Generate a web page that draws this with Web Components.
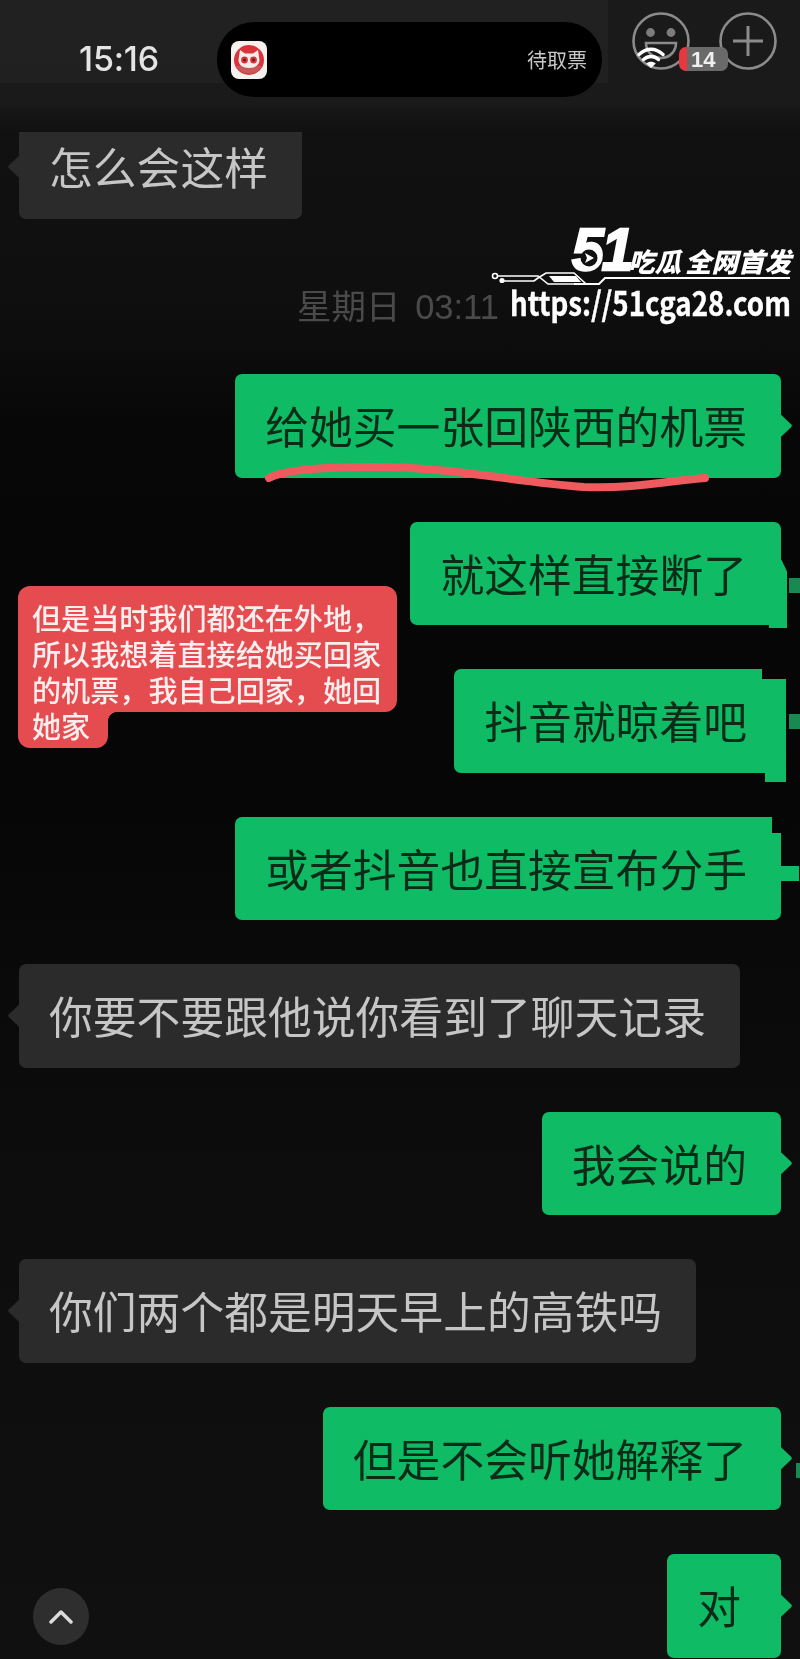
<!DOCTYPE html>
<html lang="zh-CN">
<head>
<meta charset="utf-8">
<title>聊天记录</title>
<style>
html,body{margin:0;padding:0;background:#0a0a0a}
body{width:800px;height:1659px;overflow:hidden;font-family:"Noto Sans CJK SC","Liberation Sans",sans-serif}
</style>
</head>
<body>
<chat-screen>
  <status-header slot="header"></status-header>
  <chat-bubble side="in" first>怎么会这样</chat-bubble>
  <time-stamp>星期日 03:11</time-stamp>
  <chat-bubble side="out">给她买一张回陕西的机票<ink-underline></ink-underline></chat-bubble>
  <chat-bubble side="out" glitch="a">就这样直接断了</chat-bubble>
  <chat-bubble side="out" glitch="b">抖音就晾着吧</chat-bubble>
  <chat-bubble side="out" glitch="c">或者抖音也直接宣布分手</chat-bubble>
  <chat-bubble side="in">你要不要跟他说你看到了聊天记录</chat-bubble>
  <chat-bubble side="out">我会说的</chat-bubble>
  <chat-bubble side="in">你们两个都是明天早上的高铁吗</chat-bubble>
  <chat-bubble side="out" glitch="d">但是不会听她解释了</chat-bubble>
  <chat-bubble side="out" wide>对</chat-bubble>
  <note-label slot="overlay"></note-label>
  <site-watermark slot="overlay"></site-watermark>
  <scroll-button slot="overlay"></scroll-button>
</chat-screen>

<script>
function define(name, css, html){
  customElements.define(name, class extends HTMLElement{
    constructor(){
      super();
      const root=this.attachShadow({mode:'open'});
      root.innerHTML='<style>'+css+'</style>'+html;
    }
  });
}

define('chat-screen',`
  :host{display:block;position:relative;width:800px;height:1659px;overflow:hidden;filter:blur(.45px);
    background:linear-gradient(#111 130px,#0f0f0f 300px,#070707 430px,#060606 780px,#0a0a0a 1000px,#0e0e0e 1300px,#101011 1659px)}
  .head{position:relative;z-index:2}
  .list{display:flex;flex-direction:column;margin-top:-17px}
`,`
  <div class="head"><slot name="header"></slot></div>
  <div class="list"><slot></slot></div>
  <slot name="overlay"></slot>
`);

define('status-header',`
  :host{display:flex;align-items:flex-start;box-sizing:border-box;height:132px;padding:12px 0 0 79px;
    background:
      linear-gradient(#212121,#202020) 0 0/608px 83px no-repeat,
      linear-gradient(#1a1a1a 0 104px,#151515 112px,#121212 130px,#101010 132px);
    font-family:Inter,"Liberation Sans",sans-serif}
  .time{width:138px;margin-top:27px;font-size:34px;line-height:40px;font-weight:500;color:#e4e4e4;letter-spacing:-.2px}
  .pill{display:flex;align-items:center;justify-content:space-between;box-sizing:border-box;width:385px;height:75px;margin-top:10px;
    padding:0 15px 0 14px;border-radius:37px;background:#000}
  .app{display:block;width:36px;height:38px}
  .ticket{font:20px/24px "Noto Sans CJK SC",sans-serif;color:#c8c8c8}
  .tools{display:flex;gap:29px;margin-left:30px;position:relative}
  .wifi{position:absolute;left:5px;top:34px;width:28px;height:23px}
  .badge{position:absolute;left:47px;top:35px;width:49px;height:24px;border-radius:7px;box-sizing:border-box;padding-left:12px;
    background:linear-gradient(90deg,#e8383f 0 8px,#6a6a6a 8px);color:#f0f0f0;font:700 22px/25px "Liberation Sans",sans-serif}
  svg.ico{display:block;width:58px;height:58px}
`,`
  <div class="time">15:16</div>
  <div class="pill">
    <svg class="app" viewBox="0 0 36 38">
      <rect x="0" y="0" width="36" height="38" rx="8" fill="#f6f0ee"/>
      <circle cx="18" cy="19" r="15" fill="#d9343a"/>
      <path d="M5 25h26a15 15 0 0 1-26 0z" fill="#c9585a"/>
      <path d="M9 9l5 3.500h8l5-3.500 1.500 10c0 5-4.500 8-10.500 8S7.500 24 7.500 19z" fill="#f6ecea"/>
      <circle cx="13.500" cy="19" r="3.400" fill="#d9343a"/>
      <circle cx="22.500" cy="19" r="3.400" fill="#d9343a"/>
      <circle cx="13.500" cy="19" r="1.400" fill="#5a2024"/>
      <circle cx="22.500" cy="19" r="1.400" fill="#5a2024"/>
    </svg>
    <span class="ticket">待取票</span>
  </div>
  <div class="tools">
    <svg class="ico" viewBox="0 0 58 58" fill="none" stroke="#8b8b8b" stroke-width="2.6">
      <circle cx="29" cy="29" r="27.5"/>
      <circle cx="18.5" cy="20.5" r="4.4" fill="#7c7c7c" stroke="none"/>
      <circle cx="39" cy="20.5" r="4.4" fill="#7c7c7c" stroke="none"/>
      <path d="M14 31h30c0 8-6 15-15 15s-15-7-15-15z"/>
    </svg>
    <svg class="ico" viewBox="0 0 58 58" fill="none" stroke="#8b8b8b" stroke-width="2.6">
      <circle cx="29" cy="29" r="27.5"/>
      <path d="M14 29h30M29 14v30" stroke-width="3"/>
    </svg>
    <svg class="wifi" viewBox="0 0 28 23" fill="none" stroke="#fff" stroke-width="3.4" stroke-linecap="round">
      <path d="M2 8.500C9.500 1.500 18.500 1.500 26 8.500"/>
      <path d="M6.500 13.500C11 9.500 17 9.500 21.500 13.500"/>
      <path d="M14 22l-4.800-4.500c2.800-2.300 6.800-2.300 9.600 0z" fill="#fff" stroke="none"/>
    </svg>
    <div class="badge">14</div>
  </div>
`);

define('chat-bubble',`
  :host{display:block;position:relative;box-sizing:border-box;width:fit-content;height:103.5px;padding:0 34px 0 30px;margin-bottom:44px;
    border-radius:7px;font:400 43.8px/102px "Noto Sans CJK SC",sans-serif;white-space:nowrap}
  :host([side=out]){align-self:flex-end;margin-right:19px;background:#0fbc65;color:#0a2b17}
  :host([side=in]){align-self:flex-start;margin-left:19px;background:#2b2b2b;color:#c6c6c6}
  :host([wide]){padding:0 40px 0 30px}
  :host(:last-child){margin-bottom:0}
  i{position:absolute;display:block;background:#0fbc65}
  .tail{top:50%;margin-top:-12px;width:12px;height:24px;clip-path:polygon(0 0,92% 44%,100% 50%,92% 56%,0 100%)}
  :host([side=out]) .tail{left:100%;margin-left:-1px}
  :host([side=in]) .tail{right:100%;margin-right:-1px;background:#2b2b2b;clip-path:polygon(100% 0,8% 44%,0 50%,8% 56%,100% 100%)}
  .p1,.p2,.p3,.p4{display:none}
  :host([glitch=a]) .tail,:host([glitch=b]) .tail,:host([glitch=c]) .tail{display:none}
  :host([glitch=a]) .p1{display:block;left:calc(100% - 8px);top:38px;bottom:-3px;width:14px;clip-path:polygon(0 0,60% 0,100% 12px,100% 100%,0 100%)}
  :host([glitch=a]) .p2{display:block;right:-6px;bottom:-3px;width:18px;height:4px}
  :host([glitch=a]) .p3{display:block;left:calc(100% + 8px);top:56px;width:11px;height:15px;background:#178a52}
  :host([glitch=b]) .p1{display:block;left:calc(100% - 8px);top:10px;bottom:-9px;width:13px}
  :host([glitch=b]) .p2{display:block;right:-5px;bottom:-9px;width:21px;height:10px}
  :host([glitch=b]) .p3{display:block;left:calc(100% + 8px);top:45px;width:11px;height:15px;background:#178a52}
  :host([glitch=b]) .p4{display:block;right:-1px;top:-1px;width:20px;height:11px;background:#060606}
  :host([glitch=c]) .p3{display:block;left:100%;top:49px;width:18px;height:15px}
  :host([glitch=c]) .p4{display:block;right:-5px;top:-3px;width:14px;height:19px;background:#060606}
  :host([glitch=d]) .p3{display:block;left:calc(100% + 15px);top:56px;width:4px;height:15px;background:#178a52}
`,`
  <slot></slot>
  <i class="tail"></i><i class="p1"></i><i class="p2"></i><i class="p3"></i><i class="p4"></i>
`);

define('time-stamp',`
  :host{display:block;box-sizing:border-box;height:155.5px;margin-top:-44px;padding:68px 4px 0 0;text-align:center;
    font:400 34.5px/40px "Liberation Sans","Noto Sans CJK SC",sans-serif;color:#4a4a4a;word-spacing:5px}
`,`<slot></slot>`);

define('ink-underline',`
  :host{position:absolute;left:29px;top:88px;width:450px;height:34px}
  svg{display:block;width:100%;height:100%;overflow:visible}
`,`
  <svg viewBox="0 0 450 34" fill="none">
    <path d="M5 16C20 8 60 5 110 5C190 5 250 20 320 25C370 27 410 18 441 16" stroke="#ee5a5e" stroke-width="8" stroke-linecap="round"/>
  </svg>
`);

define('note-label',`
  :host{position:absolute;left:18px;top:586px;width:379px;color:#fbeeee;font:500 29.1px/36.4px "Liberation Sans","Noto Sans CJK SC",sans-serif}
  .top{box-sizing:border-box;height:126px;padding:15.5px 0 0 14px;border-radius:12px 12px 12px 0;background:#e54c4f;white-space:nowrap}
  .bot{position:relative;box-sizing:border-box;width:90px;height:36px;padding:2.5px 0 0 14px;line-height:26px;border-radius:0 0 12px 12px;background:#e54c4f;white-space:nowrap}
  .bot::after{content:"";position:absolute;left:100%;top:0;width:10px;height:10px;background:radial-gradient(circle at 100% 100%,transparent 10px,#e54c4f 10.5px)}
`,`
  <div class="top">
    <div>但是当时我们都还在外地，</div>
    <div>所以我想着直接给她买回家</div>
    <div>的机票，我自己回家，她回</div>
  </div>
  <div class="bot">她家</div>
`);

define('site-watermark',`
  :host{position:absolute;left:490px;top:222px;width:310px;height:105px;color:#fff}
  .brand{position:absolute;left:82px;top:-2px;font:italic 700 60px/60px "Liberation Sans",sans-serif;-webkit-text-stroke:2.5px #fff;letter-spacing:-2px;transform:scaleX(.95);transform-origin:0 0}
  .play{position:absolute;left:90px;top:27px;width:18px;height:18px}
  .slogan{position:absolute;left:138px;top:22px;font:italic 900 26.500px/34px "Noto Sans CJK SC",sans-serif;white-space:nowrap;word-spacing:-2px}
  .circuit{position:absolute;left:0;top:46px;width:310px;height:24px;overflow:visible}
  .url{position:absolute;left:20px;top:58px;font:700 33px/44px "Noto Sans CJK SC",sans-serif;white-space:nowrap;transform:scaleX(.84);transform-origin:0 0;-webkit-text-stroke:.4px #fff}
`,`
  <div class="brand">51</div>
  <svg class="play" viewBox="0 0 18 18"><circle cx="9" cy="9" r="8.500" fill="#111"/><path d="M5 4l9 5-9 5 2-5z" fill="#fff"/></svg>
  <div class="slogan">吃瓜 全网首发</div>
  <svg class="circuit" viewBox="0 0 310 24" fill="none" stroke="#fff" stroke-width="1.600">
    <circle cx="5" cy="8" r="2.500"/>
    <circle cx="12" cy="12.500" r="1.800" fill="#fff"/>
    <path d="M8 8h40l10 8h38l-12-11H56l-8 5-4 3H14"/>
    <path d="M84 16l1 0h24l6-6h185" stroke-width="2"/>
    <path d="M59 8h27l5 6H64z" fill="#fff" stroke="none"/>
  </svg>
  <div class="url">https://51cga28.com</div>
`);

define('scroll-button',`
  :host{position:absolute;left:33px;top:1588px;width:56px;height:57px;border-radius:50%;background:#2e2e2e;display:flex;align-items:center;justify-content:center}
  svg{display:block;width:24px;height:14px}
`,`
  <svg viewBox="0 0 24 14" fill="none"><path d="M2 12L12 2l10 10" stroke="#dcdcdc" stroke-width="3.500" stroke-linecap="round" stroke-linejoin="round"/></svg>
`);
</script>
</body>
</html>
